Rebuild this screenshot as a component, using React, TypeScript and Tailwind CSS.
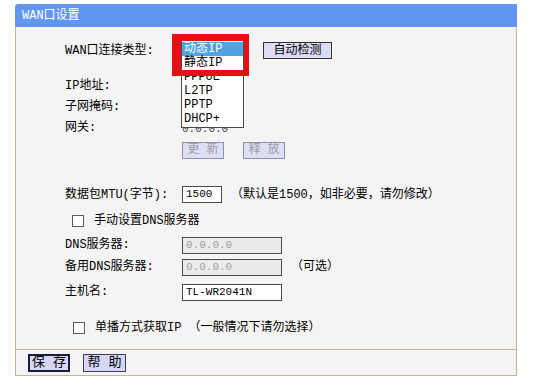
import React from 'react';

const font = "font-['Liberation_Mono','Noto_Sans_CJK_SC',monospace]";

const Label: React.FC<{ text: string }> = ({ text }) => (
    <div className="w-[117px] shrink-0 text-[12px] leading-[14px] text-black">{text}</div>
);

const TextBox: React.FC<{ value: string; width: string; disabled?: boolean }> = ({ value, width, disabled }) => (
    <div
        className={`${width} h-[17px] border border-[#4a4a4a] flex items-center pl-[3px] text-[11px] leading-[13px] ${
            disabled ? 'bg-[#ebebeb] text-[#a0a0a0]' : 'bg-white text-black'
        }`}
    >
        {value}
    </div>
);

const CheckBox: React.FC = () => (
    <div className="w-[12px] h-[12px] border border-[#5a5a5a] bg-white shrink-0"></div>
);

const options = ['动态IP', '静态IP', 'PPPoE', 'L2TP', 'PPTP', 'DHCP+'];

const App: React.FC = () => {
    return (
        <div className={`relative w-[544px] h-[386px] bg-white overflow-hidden ${font}`}>
            <div className="ml-[15px] mt-[4px] w-[502px]">
                {/* title bar */}
                <div className="h-[23px] bg-[#6296f0] rounded-tl-[3px] flex items-center pl-[7px] text-[12px] text-white">
                    WAN口设置
                </div>

                {/* body */}
                <div className="h-[322px] bg-[#f4f4f4] border-x border-[#c9b48f] pl-[49px] flex flex-col">
                    <div className="mt-[14px] h-[19px] flex items-center">
                        <Label text="WAN口连接类型:" />
                        <div className="w-[62px] h-[17px] bg-white border border-[#4a4a4a]"></div>
                        <button className="ml-[19px] w-[69px] h-[17px] bg-[#dcdcf6] border border-[#333] text-[12px] leading-[14px] text-black">
                            自动检测
                        </button>
                    </div>
                    <div className="mt-[15px] h-[21px] flex items-center">
                        <Label text="IP地址:" />
                    </div>
                    <div className="h-[21px] flex items-center">
                        <Label text="子网掩码:" />
                    </div>
                    <div className="h-[21px] flex items-center">
                        <Label text="网关:" />
                        <span className="mt-[4px] text-[11px] text-[#444]">0.0.0.0</span>
                    </div>
                    <div className="mt-[1px] h-[22px] flex items-center">
                        <div className="w-[117px] shrink-0"></div>
                        <button className="w-[42px] h-[17px] bg-[#dde0f4] border border-[#8c90b0] text-[12px] leading-[14px] text-[#9a9aa8]">
                            更 新
                        </button>
                        <button className="ml-[19px] w-[42px] h-[17px] bg-[#dde0f4] border border-[#8c90b0] text-[12px] leading-[14px] text-[#9a9aa8]">
                            释 放
                        </button>
                    </div>

                    <div className="mt-[23px] h-[21px] flex items-center">
                        <Label text="数据包MTU(字节):" />
                        <TextBox value="1500" width="w-[40px]" />
                        <span className="ml-[9px] text-[12px] leading-[14px] text-black">（默认是1500，如非必要，请勿修改）</span>
                    </div>
                    <div className="mt-[6px] h-[20px] flex items-center pl-[7px]">
                        <CheckBox />
                        <span className="ml-[10px] text-[12px] leading-[14px] text-black">手动设置DNS服务器</span>
                    </div>
                    <div className="mt-[4px] h-[20px] flex items-center">
                        <Label text="DNS服务器:" />
                        <TextBox value="0.0.0.0" width="w-[100px]" disabled />
                    </div>
                    <div className="mt-[2px] h-[20px] flex items-center">
                        <Label text="备用DNS服务器:" />
                        <TextBox value="0.0.0.0" width="w-[100px]" disabled />
                        <span className="ml-[9px] text-[12px] leading-[14px] text-black">（可选）</span>
                    </div>
                    <div className="mt-[5px] h-[20px] flex items-center">
                        <Label text="主机名:" />
                        <TextBox value="TL-WR2041N" width="w-[100px]" />
                    </div>
                    <div className="mt-[16px] h-[20px] flex items-center pl-[8px]">
                        <CheckBox />
                        <span className="ml-[10px] text-[12px] leading-[14px] text-black">单播方式获取IP （一般情况下请勿选择）</span>
                    </div>
                </div>

                {/* footer */}
                <div className="h-[27px] bg-[#f4f4f4] border border-[#c9b48f] flex items-center pl-[12px] gap-[13px]">
                    <button className="w-[42px] h-[18px] bg-[#d6d6f6] border-2 border-[#1c1c3c] text-[13px] leading-[14px] text-black">
                        保 存
                    </button>
                    <button className="w-[43px] h-[18px] bg-[#d6d6f6] border border-[#3a3a5a] text-[13px] leading-[14px] text-black">
                        帮 助
                    </button>
                </div>
            </div>

            {/* open select list */}
            <div className="absolute left-[181px] top-[40px] w-[63px] h-[88px] bg-white border border-[#4a4a4a] pt-[1px]">
                {options.map((opt, i) => (
                    <div
                        key={opt}
                        className={`h-[14px] pl-[2px] text-[12px] leading-[14px] ${
                            i === 0 ? 'bg-[#4fa3e0] text-white' : 'text-black'
                        }`}
                    >
                        {opt}
                    </div>
                ))}
            </div>

            {/* red highlight frame */}
            <div className="absolute left-[172px] top-[34px] w-[77px] h-[42px] border-l-[9px] border-t-[7px] border-r-[5px] border-b-[6px] border-[#e60f14]"></div>
        </div>
    );
};

export default App;
